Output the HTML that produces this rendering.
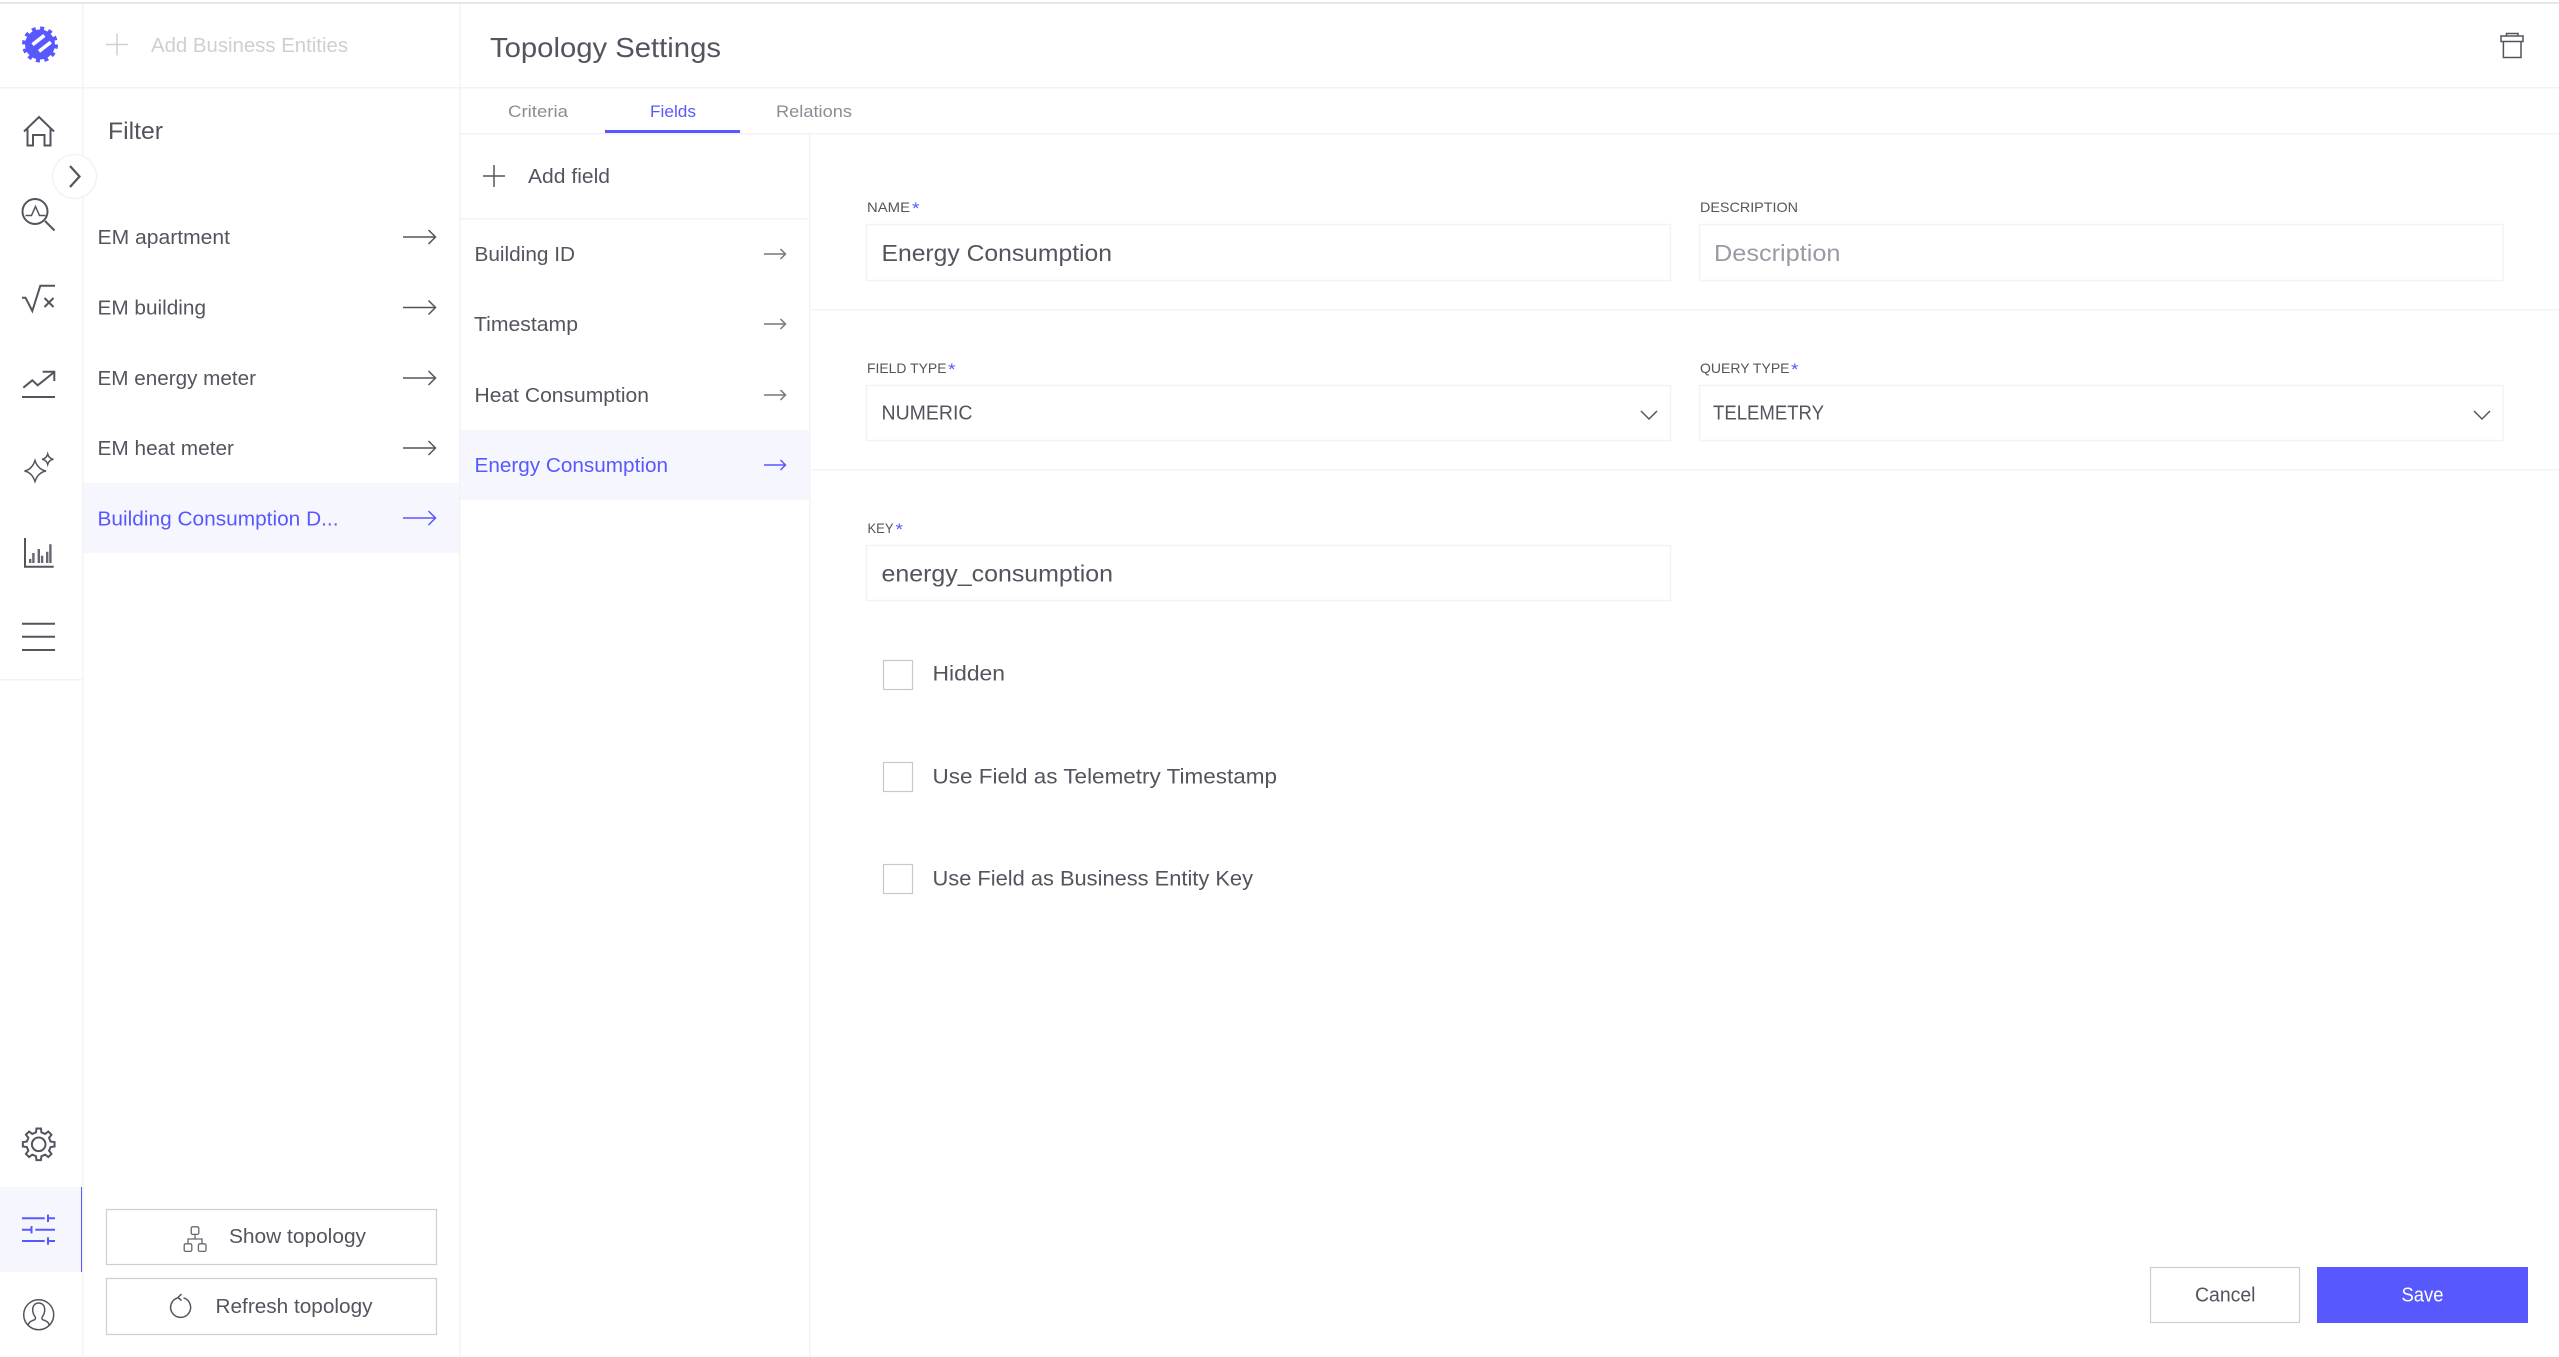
<!DOCTYPE html>
<html lang="en">
<head>
<meta charset="utf-8">
<title>Topology Settings</title>
<style>
html,body{margin:0;padding:0;background:#fff;width:2559px;height:1357px;overflow:hidden}
svg{display:block}
text{font-family:"Liberation Sans",sans-serif;fill:#54545f}
.b{fill:#5858ff}
.i{fill:none;stroke:#54545f;stroke-width:2}
.t{fill:none;stroke:#54545f;stroke-width:1.5}
.bd{fill:none;stroke:#f3f3f3;stroke-width:1.5}
</style>
</head>
<body>
<svg width="2559" height="1357" viewBox="0 0 2559 1357" xmlns="http://www.w3.org/2000/svg">
<rect width="2559" height="1357" fill="#fff"/>
<!-- Highlights -->
<rect x="83" y="483" width="376" height="70" fill="#f6f6ff"/>
<rect x="460" y="430" width="349" height="70" fill="#f6f6ff"/>
<rect x="0" y="1187" width="81" height="85" fill="#f6f6ff"/>
<rect x="81" y="1187" width="1.5" height="85" fill="#5858ff"/>
<!-- Structure lines -->
<rect x="0" y="2" width="2559" height="2" fill="#e6e6e6"/>
<rect x="82" y="4" width="1.5" height="1353" fill="#f3f3f3"/>
<rect x="459" y="4" width="1.5" height="1353" fill="#f3f3f3"/>
<rect x="809" y="133" width="1.5" height="1224" fill="#f3f3f3"/>
<rect x="0" y="87" width="2559" height="1.5" fill="#f3f3f3"/>
<rect x="460" y="133" width="2099" height="1.5" fill="#f3f3f3"/>
<rect x="460" y="218" width="349" height="1.5" fill="#f3f3f3"/>
<rect x="810" y="309" width="1749" height="1.5" fill="#f3f3f3"/>
<rect x="810" y="469" width="1749" height="1.5" fill="#f3f3f3"/>
<rect x="0" y="679" width="82" height="1.5" fill="#f3f3f3"/>
<rect x="605" y="130" width="135" height="3" fill="#5858ff"/>

<!-- Logo -->
<g transform="translate(40 44.5)">
<circle r="15" fill="#5858ff"/>
<circle r="16" fill="none" stroke="#5858ff" stroke-width="4" stroke-dasharray="4 4.38"/>
<g transform="rotate(-38)" fill="#fff">
<rect x="-6" y="-6.3" width="15" height="3.6"/>
<rect x="-5" y="3" width="15" height="3.6"/>
</g>
</g>

<!-- Sidebar icons -->
<path class="i" d="M24 131.5L39 117L54 131.5M50.5 128V145.5H44.5V135H33V145.5H27.5V128"/>
<circle class="i" cx="35" cy="211.5" r="12.5"/>
<path class="i" d="M45 221L54.5 230.5"/>
<path class="t" d="M25.5 215.5H31.5L35.5 206.5L39.5 215.5H45.5" stroke-width="1"/>
<path class="i" d="M22 297.7H25.5L32.3 311L40.3 285.7H55M44.5 298L53.5 307M53.5 298L44.5 307"/>
<path class="i" d="M22 397H55M23.3 387.7L32.3 380.3L37.7 385.3L54.3 372M42.7 371.7H54.3V381"/>
<path class="t" d="M24.5 471Q32 469.5 35 460.5Q38 469.5 46 471Q38 472.5 35 481.5Q32 472.5 24.5 471Z"/>
<path class="t" d="M42 459.3Q46.5 458.5 47.7 454Q49 458.5 53.4 459.3Q49 460 47.7 464.5Q46.5 460 42 459.3Z"/>
<path class="i" d="M25 538V566.7H53.7"/>
<path d="M29 559h2.4v4h-2.4zM32.2 553h2.4v10h-2.4zM37.6 549h2.4v14h-2.4zM40.9 555.7h2.4v7.3h-2.4zM46 551.7h2.4v11.3h-2.4zM49.2 544.3h2.4v18.7h-2.4z" fill="#66666f"/>
<path class="i" d="M22 623.7H55M22 636.7H55M22 650H55"/>
<g transform="translate(38.7 1144.3)">
<path class="i" d="M-2.74 -11.89L-2.23 -15.84L2.23 -15.84L2.74 -11.89L6.47 -10.34L9.62 -12.78L12.78 -9.62L10.34 -6.47L11.89 -2.74L15.84 -2.23L15.84 2.23L11.89 2.74L10.34 6.47L12.78 9.62L9.62 12.78L6.47 10.34L2.74 11.89L2.23 15.84L-2.23 15.84L-2.74 11.89L-6.47 10.34L-9.62 12.78L-12.78 9.62L-10.34 6.47L-11.89 2.74L-15.84 2.23L-15.84 -2.23L-11.89 -2.74L-10.34 -6.47L-12.78 -9.62L-9.62 -12.78L-6.47 -10.34Z"/>
<circle class="i" r="6.8"/>
</g>
<path d="M22 1218.3H44.7M48 1214.6V1222M48 1218.3H55M22 1229.7H31.5M31.5 1226V1233.4M35.3 1229.7H55M22 1241H44.7M48 1237.3V1244.7M48 1241H55" fill="none" stroke="#5858ff" stroke-width="2"/>
<circle class="t" cx="38.7" cy="1314.7" r="15"/>
<path class="t" d="M28 1326C28.5 1322 31 1321 34.5 1319.8C35.8 1319.3 35.8 1317.5 34.8 1316.3C33 1314 32.7 1311.5 32.7 1309.5C32.7 1305.5 35.3 1303 38.7 1303C42.1 1303 44.7 1305.5 44.7 1309.5C44.7 1311.5 44.4 1314 42.6 1316.3C41.6 1317.5 41.6 1319.3 42.9 1319.8C46.4 1321 48.9 1322 49.4 1326"/>

<!-- Toggle -->
<circle cx="74.5" cy="176.5" r="22" fill="#fff" stroke="#f3f3f3" stroke-width="1.5"/>
<path d="M70 166L79.5 176.5L70 187" fill="none" stroke="#54545f" stroke-width="2.2"/>

<!-- Column 1 header -->
<path d="M106 44.5H128M117 33.5V55.5" fill="none" stroke="#cfcfd6" stroke-width="1.5"/>
<text x="151" y="52" font-size="20" textLength="197" lengthAdjust="spacingAndGlyphs" style="fill:#cfcfd3">Add Business Entities</text>
<text x="108" y="139" font-size="24" textLength="55" lengthAdjust="spacingAndGlyphs">Filter</text>

<!-- Column 1 list -->
<text x="97.5" y="244" font-size="20" textLength="132.5" lengthAdjust="spacingAndGlyphs">EM apartment</text>
<text x="97.5" y="314.5" font-size="20" textLength="108.5" lengthAdjust="spacingAndGlyphs">EM building</text>
<text x="97.5" y="385" font-size="20" textLength="158.5" lengthAdjust="spacingAndGlyphs">EM energy meter</text>
<text x="97.5" y="455" font-size="20" textLength="136.5" lengthAdjust="spacingAndGlyphs">EM heat meter</text>
<text x="97.5" y="525.5" font-size="20" textLength="241" lengthAdjust="spacingAndGlyphs" class="b">Building Consumption D...</text>
<path class="t" d="M403 237H435.5M428.5 230L435.5 237L428.5 244M403 307.5H435.5M428.5 300.5L435.5 307.5L428.5 314.5M403 378H435.5M428.5 371L435.5 378L428.5 385M403 448H435.5M428.5 441L435.5 448L428.5 455"/>
<path d="M403 518H435.5M428.5 511L435.5 518L428.5 525" fill="none" stroke="#5858ff" stroke-width="1.5"/>

<!-- Bottom left buttons -->
<rect x="106.5" y="1209.5" width="330" height="55" fill="#fff" stroke="#cdcdd4" stroke-width="1.2"/>
<rect x="106.5" y="1278.5" width="330" height="56" fill="#fff" stroke="#cdcdd4" stroke-width="1.2"/>
<text x="229" y="1243" font-size="20" textLength="137" lengthAdjust="spacingAndGlyphs">Show topology</text>
<text x="215.5" y="1313" font-size="20" textLength="157" lengthAdjust="spacingAndGlyphs">Refresh topology</text>
<path d="M192.7 1226.8h4.6a1.5 1.5 0 0 1 1.5 1.5v4.6a1.5 1.5 0 0 1-1.5 1.5h-4.6a1.5 1.5 0 0 1-1.5-1.5v-4.6a1.5 1.5 0 0 1 1.5-1.5zM185.7 1243.8h4.6a1.5 1.5 0 0 1 1.5 1.5v4.6a1.5 1.5 0 0 1-1.5 1.5h-4.6a1.5 1.5 0 0 1-1.5-1.5v-4.6a1.5 1.5 0 0 1 1.5-1.5zM199.9 1243.8h4.6a1.5 1.5 0 0 1 1.5 1.5v4.6a1.5 1.5 0 0 1-1.5 1.5h-4.6a1.5 1.5 0 0 1-1.5-1.5v-4.6a1.5 1.5 0 0 1 1.5-1.5zM195 1234.4V1239M188 1243.8V1239H202V1243.8" fill="none" stroke="#66666f" stroke-width="1.3"/>
<path class="t" d="M178.5 1297.6A10 10 0 1 0 183.5 1297.8M181.5 1294L178 1297.5L181.5 1300.5"/>

<!-- Header -->
<text x="490" y="57" font-size="28" textLength="231" lengthAdjust="spacingAndGlyphs">Topology Settings</text>
<path class="t" d="M2506.5 36V33.5H2518V36M2501 36H2523V41.5H2501ZM2503.4 41.5V57.5H2521V41.5"/>

<!-- Tabs -->
<text x="508" y="117" font-size="17" textLength="60" lengthAdjust="spacingAndGlyphs" style="fill:#8c8c96">Criteria</text>
<text x="650" y="117" font-size="17" textLength="46" lengthAdjust="spacingAndGlyphs" class="b">Fields</text>
<text x="776" y="117" font-size="17" textLength="76" lengthAdjust="spacingAndGlyphs" style="fill:#8c8c96">Relations</text>

<!-- Column 2 -->
<path d="M494 165V187M483 176H505" fill="none" stroke="#54545f" stroke-width="1.5"/>
<text x="528" y="183" font-size="20" textLength="82" lengthAdjust="spacingAndGlyphs">Add field</text>
<text x="474.5" y="261" font-size="20" textLength="100.5" lengthAdjust="spacingAndGlyphs">Building ID</text>
<text x="474" y="331" font-size="20" textLength="104" lengthAdjust="spacingAndGlyphs">Timestamp</text>
<text x="474.5" y="402" font-size="20" textLength="174.5" lengthAdjust="spacingAndGlyphs">Heat Consumption</text>
<text x="474.5" y="472" font-size="20" textLength="193.5" lengthAdjust="spacingAndGlyphs" class="b">Energy Consumption</text>
<path d="M764 254H785.5M780.5 249L785.5 254L780.5 259M764 324H785.5M780.5 319L785.5 324L780.5 329M764 395H785.5M780.5 390L785.5 395L780.5 400" fill="none" stroke="#77777f" stroke-width="1.5"/>
<path d="M764 465H785.5M780.5 460L785.5 465L780.5 470" fill="none" stroke="#5858ff" stroke-width="1.5"/>

<!-- Form -->
<text x="867" y="212" font-size="14" textLength="43" lengthAdjust="spacingAndGlyphs">NAME</text>
<text x="912" y="214" font-size="17" textLength="7.5" lengthAdjust="spacingAndGlyphs" class="b">*</text>
<text x="1700" y="212" font-size="14" textLength="98" lengthAdjust="spacingAndGlyphs">DESCRIPTION</text>
<rect x="866.5" y="224.5" width="804" height="56" class="bd"/>
<rect x="1699.5" y="224.5" width="803.5" height="56" class="bd"/>
<text x="881.5" y="261" font-size="23.5" textLength="230.5" lengthAdjust="spacingAndGlyphs">Energy Consumption</text>
<text x="1714" y="261" font-size="23.5" textLength="126.5" lengthAdjust="spacingAndGlyphs" style="fill:#9a9aa4">Description</text>

<text x="867" y="373" font-size="14" textLength="79.5" lengthAdjust="spacingAndGlyphs">FIELD TYPE</text>
<text x="948" y="375" font-size="17" textLength="7.5" lengthAdjust="spacingAndGlyphs" class="b">*</text>
<text x="1700" y="373" font-size="14" textLength="89.5" lengthAdjust="spacingAndGlyphs">QUERY TYPE</text>
<text x="1791" y="375" font-size="17" textLength="7.5" lengthAdjust="spacingAndGlyphs" class="b">*</text>
<rect x="866.5" y="385.5" width="804" height="55" class="bd"/>
<rect x="1699.5" y="385.5" width="803.5" height="55" class="bd"/>
<text x="881.5" y="419.5" font-size="20" textLength="91" lengthAdjust="spacingAndGlyphs">NUMERIC</text>
<text x="1713" y="419.5" font-size="20" textLength="111" lengthAdjust="spacingAndGlyphs">TELEMETRY</text>
<path class="t" d="M1641 411L1649 419L1657 411M2474 411L2482 419L2490 411"/>

<text x="867.5" y="533" font-size="14" textLength="26" lengthAdjust="spacingAndGlyphs">KEY</text>
<text x="895.5" y="535" font-size="17" textLength="7.5" lengthAdjust="spacingAndGlyphs" class="b">*</text>
<rect x="866.5" y="545.5" width="804" height="55" class="bd"/>
<text x="881.5" y="581.5" font-size="23.5" textLength="231.5" lengthAdjust="spacingAndGlyphs">energy_consumption</text>

<rect x="883.5" y="660.5" width="29" height="29" fill="#fff" stroke="#c8c8c8" stroke-width="1.2"/>
<rect x="883.5" y="762.5" width="29" height="29" fill="#fff" stroke="#c8c8c8" stroke-width="1.2"/>
<rect x="883.5" y="864.5" width="29" height="29" fill="#fff" stroke="#c8c8c8" stroke-width="1.2"/>
<text x="932.5" y="680.5" font-size="21" textLength="72.5" lengthAdjust="spacingAndGlyphs">Hidden</text>
<text x="932.5" y="783.5" font-size="21" textLength="344.5" lengthAdjust="spacingAndGlyphs">Use Field as Telemetry Timestamp</text>
<text x="932.5" y="885.5" font-size="21" textLength="320.5" lengthAdjust="spacingAndGlyphs">Use Field as Business Entity Key</text>

<!-- Footer buttons -->
<rect x="2150.5" y="1267.5" width="149" height="55" fill="#fff" stroke="#cdcdcd" stroke-width="1.2"/>
<rect x="2317" y="1267" width="211" height="56" fill="#5858ff"/>
<text x="2195" y="1301.5" font-size="20" textLength="60.5" lengthAdjust="spacingAndGlyphs">Cancel</text>
<text x="2401.5" y="1301.5" font-size="20" textLength="42" lengthAdjust="spacingAndGlyphs" style="fill:#fff">Save</text>
</svg>
</body>
</html>
